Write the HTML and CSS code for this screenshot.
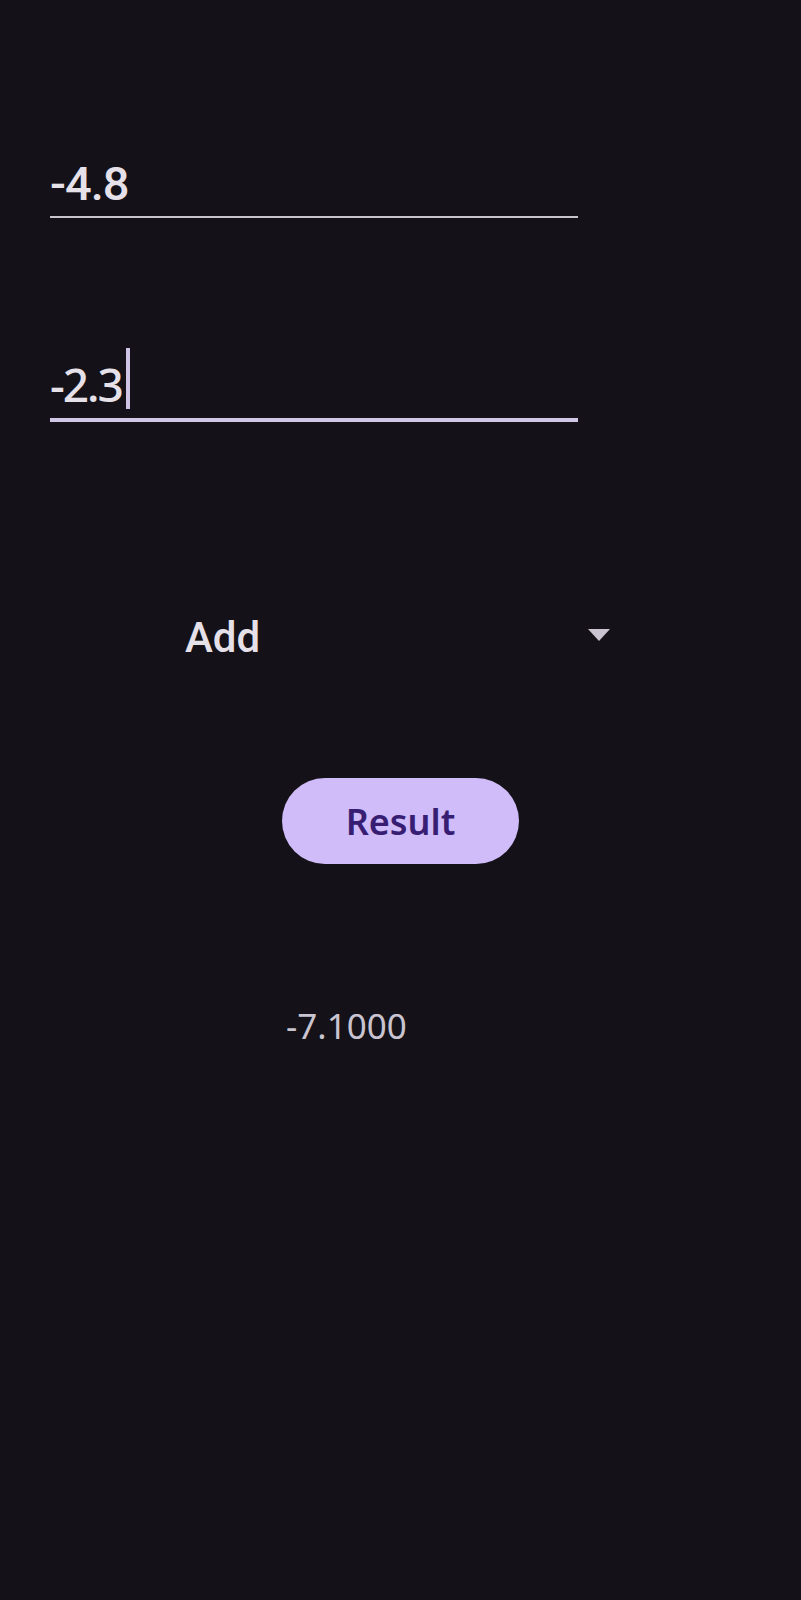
FILE: index.html
```html
<!DOCTYPE html>
<html>
<head>
<meta charset="utf-8">
<link rel="stylesheet" href="styles.css">
</head>
<body>
<main class="screen">
  <div class="field field-one"><span class="value">-4.8</span></div>
  <div class="field field-two"><span class="value">-2.3</span><span class="caret"></span></div>
  <div class="dropdown">
    <span class="dropdown-label">Add</span>
    <svg class="dropdown-arrow" width="22" height="12" viewBox="0 0 22 12"><path d="M0 0 L22 0 L11 12 Z" fill="#cac4d0"/></svg>
  </div>
  <div class="button-row"><button class="result-button">Result</button></div>
  <div class="result-value">-7.1000</div>
</main>
</body>
</html>
```

FILE: styles.css
```css
html, body {
  margin: 0;
  padding: 0;
  background: #141218;
}
body {
  width: 801px;
  height: 1600px;
  overflow: hidden;
}
.screen {
  display: flex;
  flex-direction: column;
  padding-left: 50px;
  padding-top: 154px;
}
.field {
  width: 528px;
  display: flex;
  align-items: flex-end;
  color: #e6e0e9;
  line-height: 60px;
}
.field-one {
  font-family: Roboto, sans-serif;
  font-weight: 500;
  font-size: 47px;
  letter-spacing: -1px;
  border-bottom: 2px solid #c8c4cc;
  padding-bottom: 2px;
}
.field-two {
  margin-top: 130px;
  font-family: "Noto Sans", sans-serif;
  font-weight: 500;
  font-size: 46px;
  letter-spacing: -2px;
  border-bottom: 4px solid #d0c6e6;
  padding-bottom: 4px;
}
.caret {
  display: inline-block;
  width: 4px;
  height: 61px;
  background: #cfc4e6;
  margin-left: 4px;
  margin-bottom: 5px;
  align-self: flex-end;
}
.dropdown {
  margin-top: 191px;
  display: flex;
  align-items: center;
  justify-content: space-between;
  width: 425px;
  margin-left: 135px;
  height: 50px;
}
.dropdown-label {
  font-family: Roboto, sans-serif;
  font-weight: 500;
  font-size: 42px;
  color: #e6e0e9;
  line-height: 50px;
}
.dropdown-arrow {
  display: block;
  margin-bottom: 6px;
}
.button-row {
  margin-top: 115px;
  margin-left: -50px;
  display: flex;
  justify-content: center;
}
.result-button {
  width: 237px;
  height: 86px;
  border: none;
  border-radius: 43px;
  background: #cfbcf9;
  color: #381e72;
  font-family: "Noto Sans", sans-serif;
  font-weight: 600;
  font-size: 36px;
  padding: 0;
}
.result-value {
  margin-top: 137px;
  margin-left: 236px;
  font-family: "Noto Sans", sans-serif;
  font-size: 35px;
  color: #cac4d0;
  line-height: 50px;
}
```
